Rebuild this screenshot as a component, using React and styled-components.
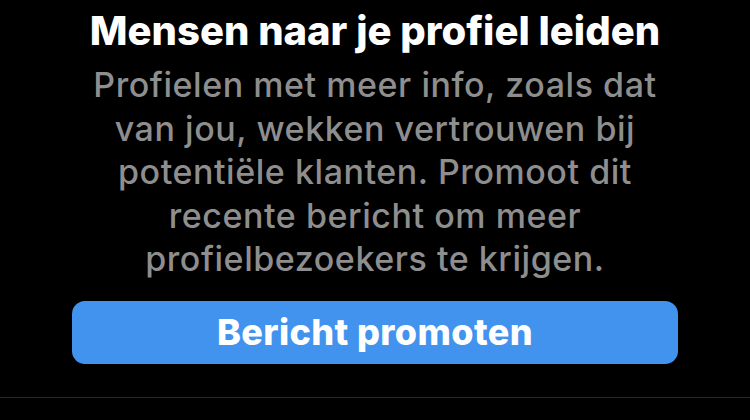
import React from "react";
import styled, { createGlobalStyle } from "styled-components";

const GlobalStyle = createGlobalStyle`
  html, body {
    margin: 0;
    padding: 0;
    background: #000;
  }
  body {
    font-family: Inter, "Noto Sans", "Liberation Sans", sans-serif;
    -webkit-font-smoothing: antialiased;
  }
`;

const Screen = styled.div`
  width: 750px;
  height: 420px;
  background: #000;
  display: flex;
  flex-direction: column;
  overflow: hidden;
`;

const Content = styled.div`
  display: flex;
  flex-direction: column;
  align-items: center;
  padding: 7px 72px 0;
`;

const Title = styled.h1`
  margin: 0;
  color: #fff;
  font-size: 40px;
  font-weight: 800;
  line-height: 48px;
  letter-spacing: 0;
  text-align: center;
  white-space: nowrap;
`;

const Body = styled.p`
  margin: 8px 0 0;
  color: #8e8e8e;
  font-size: 34px;
  font-weight: 500;
  line-height: 43.5px;
  letter-spacing: 0.55px;
  text-align: center;
  white-space: nowrap;
`;

const PrimaryButton = styled.button`
  margin-top: 20px;
  width: 606px;
  height: 63px;
  border: none;
  border-radius: 13px;
  background: #4293ee;
  color: #fff;
  font-family: inherit;
  font-size: 36px;
  font-weight: 800;
  letter-spacing: 0.4px;
  cursor: pointer;
`;

const Divider = styled.div`
  margin-top: 33px;
  height: 1px;
  background: #262626;
`;

const lines = [
  "Profielen met meer info, zoals dat",
  "van jou, wekken vertrouwen bij",
  "potentiële klanten. Promoot dit",
  "recente bericht om meer",
  "profielbezoekers te krijgen.",
];

export default function App() {
  return (
    <Screen>
      <GlobalStyle />
      <Content>
        <Title>Mensen naar je profiel leiden</Title>
        <Body>
          {lines.map((line, i) => (
            <React.Fragment key={i}>
              {line}
              {i < lines.length - 1 && <br />}
            </React.Fragment>
          ))}
        </Body>
        <PrimaryButton>Bericht promoten</PrimaryButton>
      </Content>
      <Divider />
    </Screen>
  );
}
